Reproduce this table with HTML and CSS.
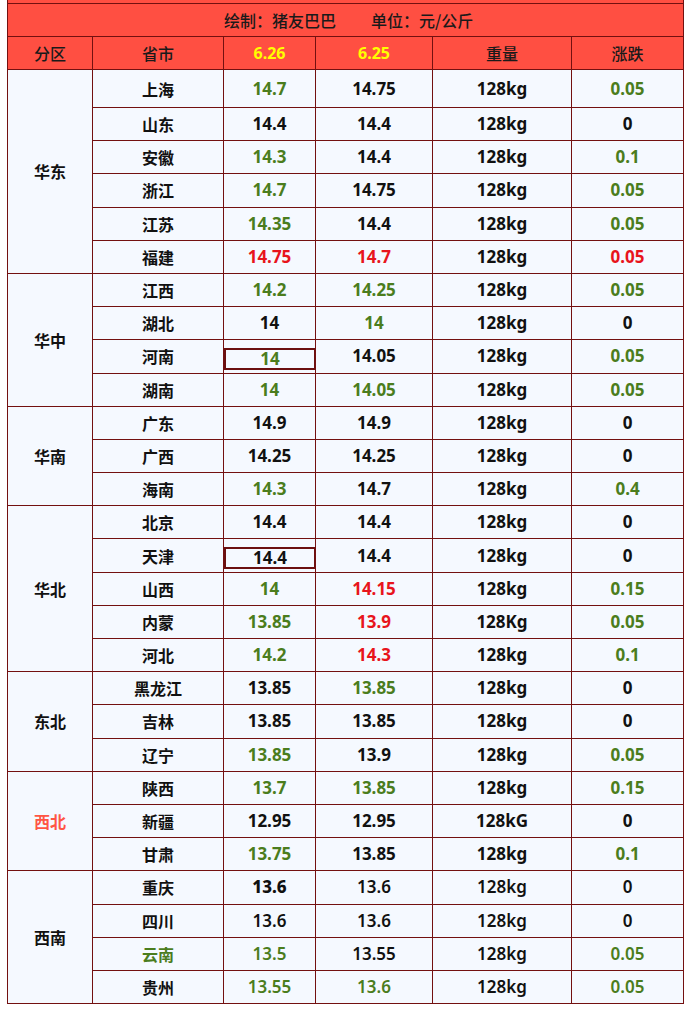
FILE: index.html
```html
<!DOCTYPE html>
<html lang="zh">
<head>
<meta charset="utf-8">
<title>猪价</title>
<link rel="stylesheet" href="styles.css">
</head>
<body>
<table class="price">
  <colgroup>
    <col class="c-region"><col class="c-prov"><col class="c-d1"><col class="c-d2"><col class="c-w"><col class="c-ch">
  </colgroup>
  <tr class="strip"><td colspan="6"></td></tr>
  <tr class="title"><td colspan="6"><span class="maker">绘制：猪友巴巴</span><span class="unit">单位：元/公斤</span></td></tr>
  <tr class="head">
    <td class="cjk">分区</td><td class="cjk">省市</td><td class="date">6.26</td><td class="date">6.25</td><td class="cjk">重量</td><td class="cjk">涨跌</td>
  </tr>

  <tr class="first">
    <td class="region" rowspan="6">华东</td>
    <td class="prov">上海</td><td class="g">14.7</td><td>14.75</td><td>128kg</td><td class="g">0.05</td>
  </tr>
  <tr><td class="prov">山东</td><td>14.4</td><td>14.4</td><td>128kg</td><td>0</td></tr>
  <tr><td class="prov">安徽</td><td class="g">14.3</td><td>14.4</td><td>128kg</td><td class="g">0.1</td></tr>
  <tr><td class="prov">浙江</td><td class="g">14.7</td><td>14.75</td><td>128kg</td><td class="g">0.05</td></tr>
  <tr><td class="prov">江苏</td><td class="g">14.35</td><td>14.4</td><td>128kg</td><td class="g">0.05</td></tr>
  <tr><td class="prov">福建</td><td class="r">14.75</td><td class="r">14.7</td><td>128kg</td><td class="r">0.05</td></tr>

  <tr><td class="region" rowspan="4">华中</td>
    <td class="prov">江西</td><td class="g">14.2</td><td class="g">14.25</td><td>128kg</td><td class="g">0.05</td></tr>
  <tr><td class="prov">湖北</td><td>14</td><td class="g">14</td><td>128kg</td><td>0</td></tr>
  <tr><td class="prov">河南</td><td class="boxed g"><div class="box">14</div></td><td>14.05</td><td>128kg</td><td class="g">0.05</td></tr>
  <tr><td class="prov">湖南</td><td class="g">14</td><td class="g">14.05</td><td>128kg</td><td class="g">0.05</td></tr>

  <tr><td class="region" rowspan="3">华南</td>
    <td class="prov">广东</td><td>14.9</td><td>14.9</td><td>128kg</td><td>0</td></tr>
  <tr><td class="prov">广西</td><td>14.25</td><td>14.25</td><td>128kg</td><td>0</td></tr>
  <tr><td class="prov">海南</td><td class="g">14.3</td><td>14.7</td><td>128kg</td><td class="g">0.4</td></tr>

  <tr><td class="region" rowspan="5">华北</td>
    <td class="prov">北京</td><td>14.4</td><td>14.4</td><td>128kg</td><td>0</td></tr>
  <tr><td class="prov">天津</td><td class="boxed"><div class="box">14.4</div></td><td>14.4</td><td>128kg</td><td>0</td></tr>
  <tr><td class="prov">山西</td><td class="g">14</td><td class="r">14.15</td><td>128kg</td><td class="g">0.15</td></tr>
  <tr><td class="prov">内蒙</td><td class="g">13.85</td><td class="r">13.9</td><td>128Kg</td><td class="g">0.05</td></tr>
  <tr><td class="prov">河北</td><td class="g">14.2</td><td class="r">14.3</td><td>128kg</td><td class="g">0.1</td></tr>

  <tr><td class="region" rowspan="3">东北</td>
    <td class="prov">黑龙江</td><td>13.85</td><td class="g">13.85</td><td>128kg</td><td>0</td></tr>
  <tr><td class="prov">吉林</td><td>13.85</td><td>13.85</td><td>128kg</td><td>0</td></tr>
  <tr><td class="prov">辽宁</td><td class="g">13.85</td><td>13.9</td><td>128kg</td><td class="g">0.05</td></tr>

  <tr><td class="region red" rowspan="3">西北</td>
    <td class="prov">陕西</td><td class="g">13.7</td><td class="g">13.85</td><td>128kg</td><td class="g">0.15</td></tr>
  <tr><td class="prov">新疆</td><td>12.95</td><td>12.95</td><td>128kG</td><td>0</td></tr>
  <tr><td class="prov">甘肃</td><td class="g">13.75</td><td>13.85</td><td>128kg</td><td class="g">0.1</td></tr>

  <tr><td class="region" rowspan="4">西南</td>
    <td class="prov">重庆</td><td class="heavy">13.6</td><td class="lite">13.6</td><td class="lite">128kg</td><td class="lite">0</td></tr>
  <tr><td class="prov">四川</td><td class="lite">13.6</td><td class="lite">13.6</td><td class="lite">128kg</td><td class="lite">0</td></tr>
  <tr><td class="prov gp">云南</td><td class="g lite">13.5</td><td class="lite">13.55</td><td class="lite">128kg</td><td class="g lite">0.05</td></tr>
  <tr><td class="prov">贵州</td><td class="g lite">13.55</td><td class="g lite">13.6</td><td class="lite">128kg</td><td class="g lite">0.05</td></tr>
</table>
</body>
</html>
```

FILE: styles.css
```css
html, body {
  margin: 0;
  padding: 0;
  background: #ffffff;
}

.price {
  margin-left: 7px;
  width: 677px;
  table-layout: fixed;
  border-collapse: collapse;
  font-family: "Noto Sans", "Noto Sans CJK SC", sans-serif;
  font-weight: 700;
  font-size: 17px;
  color: #111111;
}

.c-region { width: 85px; }
.c-prov { width: 131px; }
.c-d1 { width: 92px; }
.c-d2 { width: 117px; }
.c-w { width: 139px; }
.c-ch { width: 112px; }

.price td {
  box-sizing: border-box;
  border: 1px solid #731010;
  padding: 0;
  text-align: center;
  vertical-align: middle;
  height: 33.19px;
  background: #f5f9ff;
  line-height: 20px;
}

.price tr.strip td {
  height: 3.5px;
  border-top: none;
  background: #ff4f42;
}

.price tr.title td {
  height: 33px;
  background: #ff4f42;
  font-family: "Noto Sans CJK SC", sans-serif;
  font-weight: 500;
  font-size: 16px;
  color: #1a1a1a;
  text-align: left;
  padding-left: 216px;
}

.title .maker {
  display: inline-block;
  width: 147px;
}

.price tr.head td {
  height: 33px;
  background: #ff4f42;
  font-family: "Noto Sans CJK SC", sans-serif;
  font-weight: 500;
  font-size: 16px;
  color: #1a1a1a;
}

.price tr.head td.date {
  font-family: "Noto Sans", sans-serif;
  font-weight: 700;
  font-size: 16px;
  color: #ffff00;
}

.price tr.first td {
  height: 38px;
}

.price td.region,
.price td.prov {
  font-family: "Noto Sans CJK SC", sans-serif;
  font-size: 16px;
  font-weight: 700;
}

.price td.region.red {
  color: #ff5544;
}

.price td.gp {
  color: #4b7d1d;
}

.price td.g {
  color: #4b7d1d;
}

.price td.r {
  color: #e8141c;
}

.price td.heavy {
  font-weight: 800;
}

.price td.lite {
  font-weight: 600;
}

.price td.boxed {
  vertical-align: top;
  padding-top: 8px;
}

.box {
  height: 22px;
  box-sizing: border-box;
  line-height: 18px;
  border: 2px solid #6b1010;
  border-right-width: 1px;
}
```
